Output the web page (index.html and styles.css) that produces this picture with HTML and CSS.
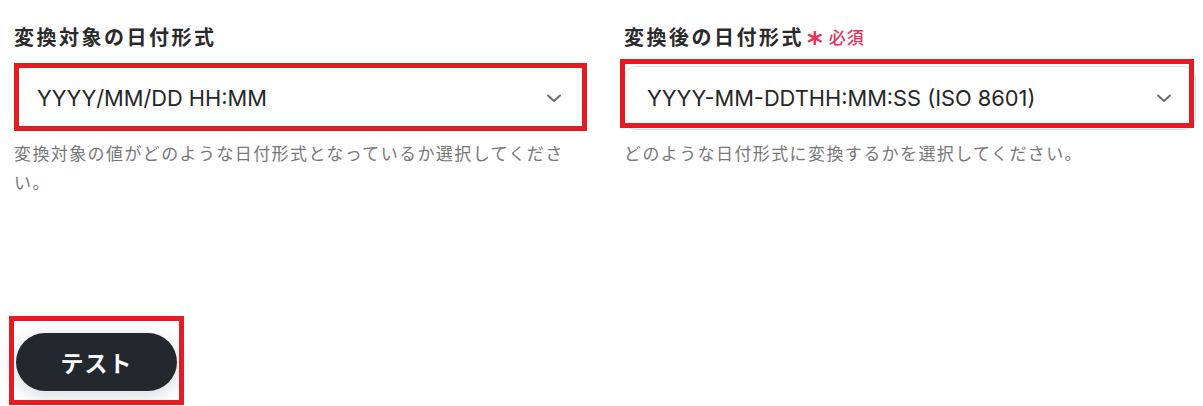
FILE: index.html
```html
<!DOCTYPE html>
<html lang="ja">
<head>
<meta charset="utf-8">
<link rel="stylesheet" href="styles.css">
</head>
<body>
<div class="page">
  <div class="fields">
    <div class="field">
      <div class="label">変換対象の日付形式</div>
      <div class="select-wrap">
        <div class="select">
          <span class="value">YYYY/MM/DD HH:MM</span>
          <svg class="chev" width="18" height="18" viewBox="0 0 18 18"><path d="M3 6.5 L9 12 L15 6.5" fill="none" stroke="#6b6b6b" stroke-width="2" stroke-linecap="round" stroke-linejoin="round"/></svg>
        </div>
        <div class="mark mark-left"></div>
      </div>
      <p class="help">変換対象の値がどのような日付形式となっているか選択してください。</p>
    </div>
    <div class="field">
      <div class="label">変換後の日付形式<span class="req"><span class="ast">*</span>必須</span></div>
      <div class="select-wrap">
        <div class="select">
          <span class="value">YYYY-MM-DDTHH:MM:SS (ISO 8601)</span>
          <svg class="chev" width="18" height="18" viewBox="0 0 18 18"><path d="M3 6.5 L9 12 L15 6.5" fill="none" stroke="#6b6b6b" stroke-width="2" stroke-linecap="round" stroke-linejoin="round"/></svg>
        </div>
        <div class="mark mark-right"></div>
      </div>
      <p class="help">どのような日付形式に変換するかを選択してください。</p>
    </div>
  </div>
  <div class="actions">
    <div class="btn-wrap">
      <button class="btn">テスト</button>
      <div class="mark mark-btn"></div>
    </div>
  </div>
</div>
</body>
</html>
```
FILE: styles.css
```css
* { box-sizing: border-box; }
html, body { margin: 0; padding: 0; background: #fff; }
body {
  font-family: "Noto Sans CJK JP", "Noto Sans", sans-serif;
  color: #222;
}
.page {
  width: 1203px;
  height: 406px;
  padding: 23px 7px 0 14px;
  overflow: hidden;
}
.fields {
  display: grid;
  grid-template-columns: 572px 572px;
  column-gap: 38px;
}
.label {
  font-size: 20px;
  font-weight: 700;
  letter-spacing: 2.5px;
  line-height: 28px;
  color: #2a2a2a;
  display: flex;
  align-items: center;
}
.req {
  display: inline-flex;
  align-items: center;
  color: #e8325a;
  font-size: 17px;
  font-weight: 500;
  letter-spacing: 1px;
  margin-left: 3px;
}
.ast {
  font-family: "DejaVu Sans", sans-serif;
  font-size: 30px;
  font-weight: 700;
  line-height: 20px;
  margin-right: 5px;
  position: relative;
  top: 6px;
}
.select-wrap {
  position: relative;
  margin-top: 15px;
}
.select {
  height: 64px;
  border: 1px solid #d9dde3;
  border-radius: 12px;
  display: flex;
  align-items: center;
  justify-content: space-between;
  padding: 0 22px 0 22px;
  background: #fff;
}
.value {
  font-family: Inter, "Noto Sans", sans-serif;
  font-size: 21.8px;
  color: #262626;
}
.chev { display: block; }
.mark {
  position: absolute;
  border: 5px solid #e31c23;
  pointer-events: none;
}
.mark-left { left: 0; top: -3px; width: 573px; height: 68px; }
.mark-right { left: -4px; top: -7px; width: 574px; height: 69px; }
.help {
  margin: 8px 0 0;
  font-size: 17px;
  line-height: 29px;
  letter-spacing: 1.4px;
  color: #777;
}
.actions {
  margin-top: 137px;
  padding-left: 2px;
}
.btn-wrap {
  position: relative;
  display: inline-block;
}
.btn {
  width: 161px;
  height: 58px;
  border: none;
  border-radius: 29px;
  background: #23272e;
  color: #fff;
  font-family: "Noto Sans CJK JP", sans-serif;
  font-size: 23px;
  font-weight: 700;
  letter-spacing: 1px;
  box-shadow: 0 4px 18px rgba(30, 40, 60, 0.18);
  display: block;
}
.mark-btn { left: -7px; top: -17px; width: 175px; height: 89px; }
```
